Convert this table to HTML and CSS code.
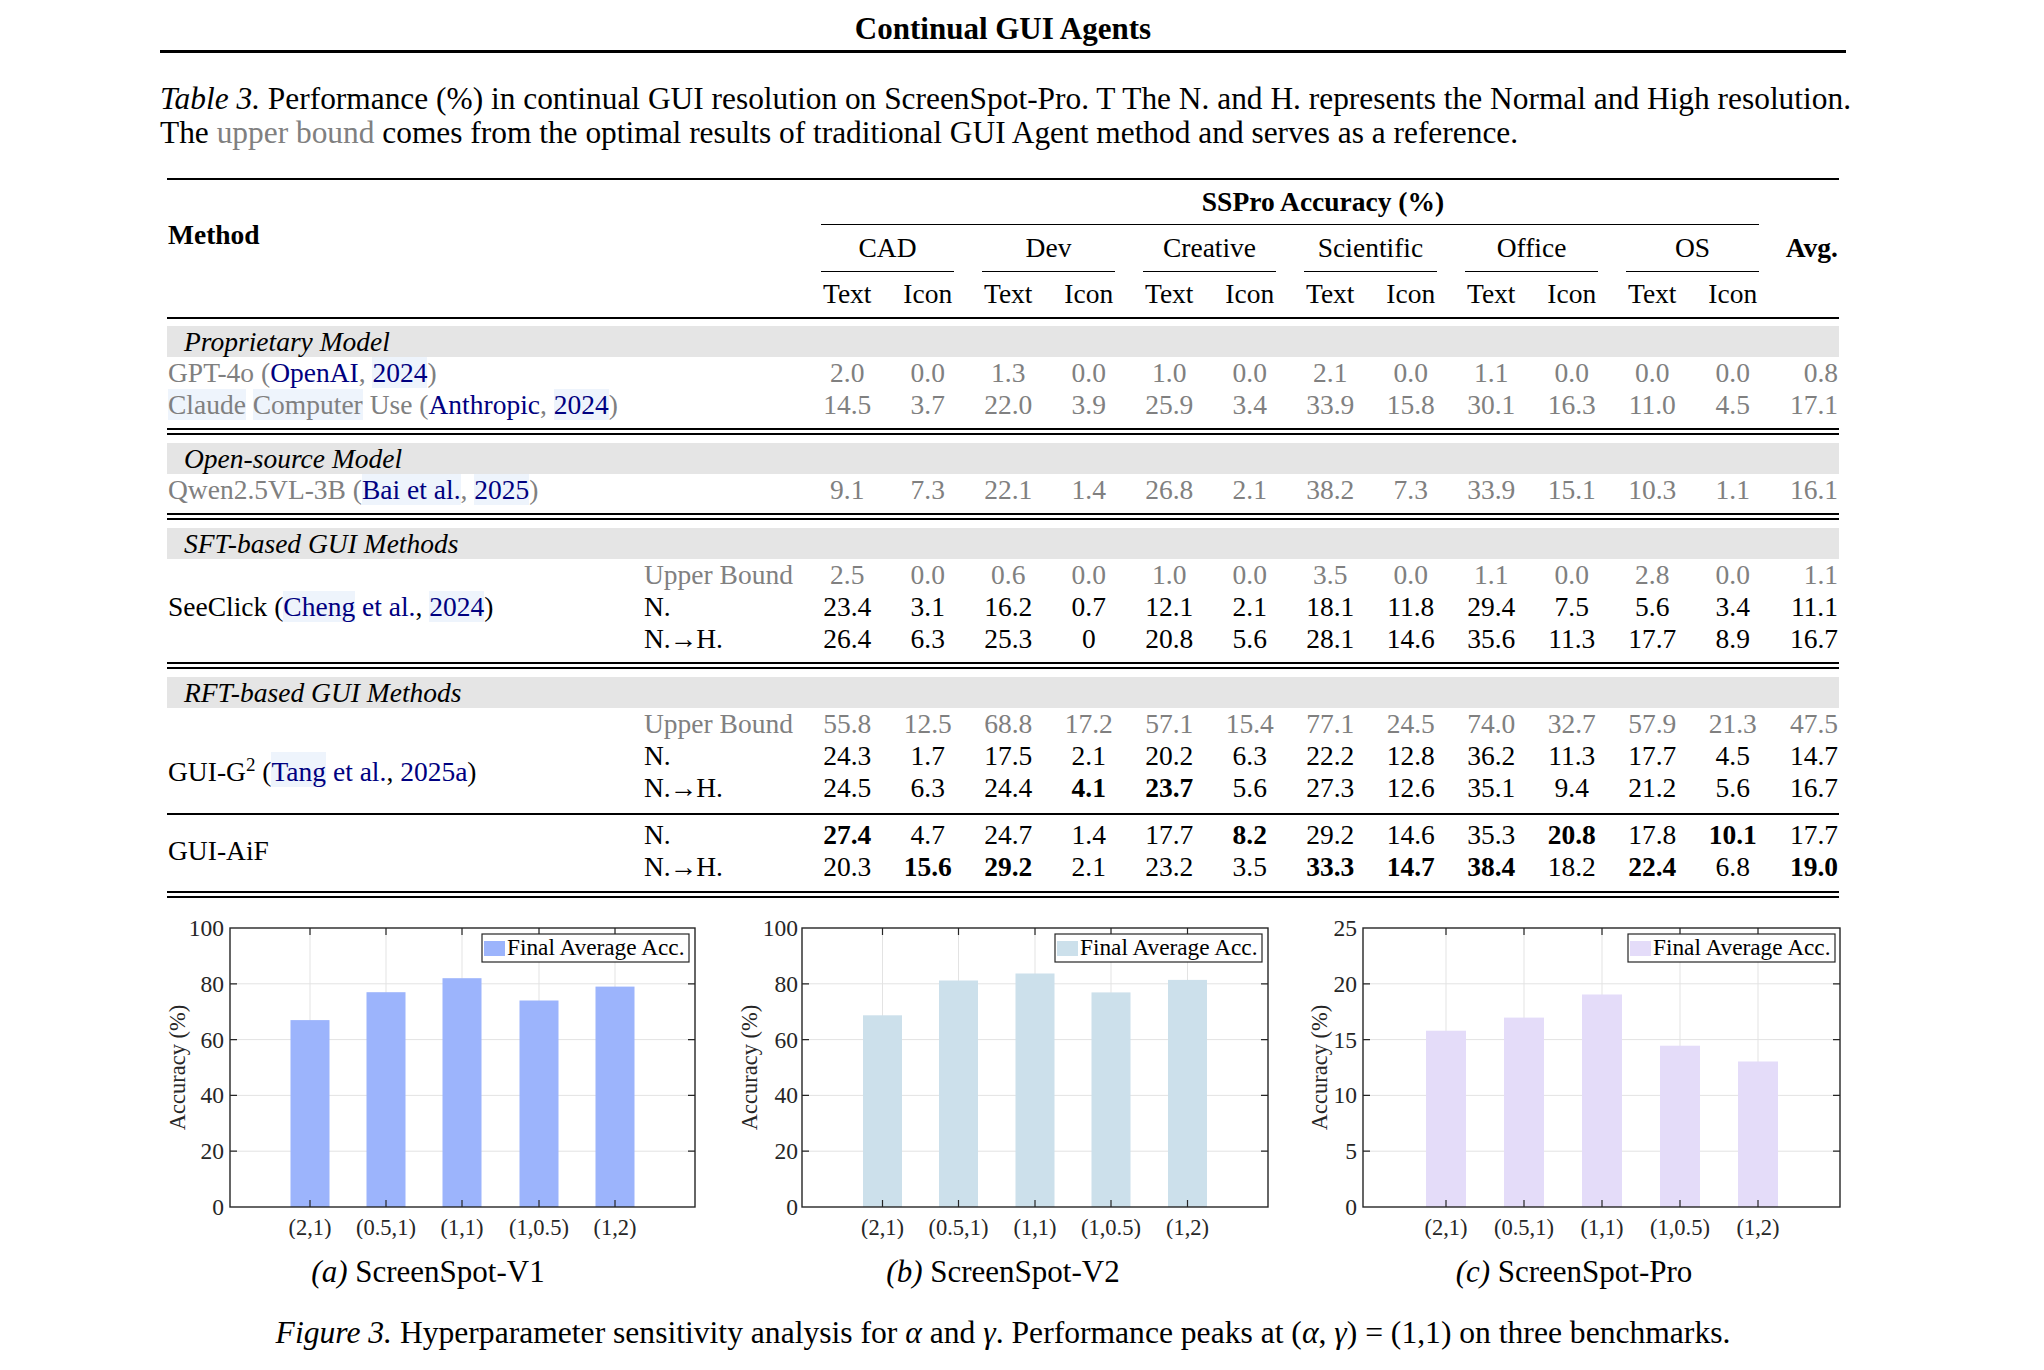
FILE: index.html
```html
<!DOCTYPE html>
<html>
<head>
<meta charset="utf-8">
<title>Continual GUI Agents</title>
<link rel="stylesheet" href="styles.css">
</head>
<body>
<div class="page">
  <header class="running">Continual GUI Agents</header>
  <p class="caption"><i>Table 3.</i> Performance (%) in continual GUI resolution on ScreenSpot-Pro. T The N. and H. represents the Normal and High resolution.<br>The <span class="gray">upper bound</span> comes from the optimal results of traditional GUI Agent method and serves as a reference.</p>

  <div class="table">
    <div class="grid thead">
      <div class="h-method">Method</div>
      <div class="h-sspro">SSPro Accuracy (%)</div>
      <div class="h-rule"></div>
      <div class="grp">CAD</div>
      <div class="grp">Dev</div>
      <div class="grp">Creative</div>
      <div class="grp">Scientific</div>
      <div class="grp">Office</div>
      <div class="grp">OS</div>
      <div class="h-avg">Avg.</div>
      <div class="sub">Text</div><div class="sub">Icon</div>
      <div class="sub">Text</div><div class="sub">Icon</div>
      <div class="sub">Text</div><div class="sub">Icon</div>
      <div class="sub">Text</div><div class="sub">Icon</div>
      <div class="sub">Text</div><div class="sub">Icon</div>
      <div class="sub">Text</div><div class="sub">Icon</div>
    </div>

    <div class="grid sec banded dbl first-sec">
      <div class="band">Proprietary Model</div>
      <div class="row muted">
        <span class="name">GPT-4o (<span class="cite">OpenAI</span>, <span class="cite hl">2024</span>)</span>
        <span class="d">2.0</span><span class="d">0.0</span><span class="d">1.3</span><span class="d">0.0</span><span class="d">1.0</span><span class="d">0.0</span><span class="d">2.1</span><span class="d">0.0</span><span class="d">1.1</span><span class="d">0.0</span><span class="d">0.0</span><span class="d">0.0</span><span class="d avg">0.8</span>
      </div>
      <div class="row muted">
        <span class="name"><span class="hl">Claude</span> <span class="hl">Computer</span> Use (<span class="cite">Anthropic</span>, <span class="cite hl">2024</span>)</span>
        <span class="d">14.5</span><span class="d">3.7</span><span class="d">22.0</span><span class="d">3.9</span><span class="d">25.9</span><span class="d">3.4</span><span class="d">33.9</span><span class="d">15.8</span><span class="d">30.1</span><span class="d">16.3</span><span class="d">11.0</span><span class="d">4.5</span><span class="d avg">17.1</span>
      </div>
    </div>

    <div class="grid sec banded dbl">
      <div class="band">Open-source Model</div>
      <div class="row muted">
        <span class="name">Qwen2.5VL-3B (<span class="cite hl">Bai et al.</span>, <span class="cite hl">2025</span>)</span>
        <span class="d">9.1</span><span class="d">7.3</span><span class="d">22.1</span><span class="d">1.4</span><span class="d">26.8</span><span class="d">2.1</span><span class="d">38.2</span><span class="d">7.3</span><span class="d">33.9</span><span class="d">15.1</span><span class="d">10.3</span><span class="d">1.1</span><span class="d avg">16.1</span>
      </div>
    </div>

    <div class="grid sec banded dbl">
      <div class="band">SFT-based GUI Methods</div>
      <span class="name multi r2-5">SeeClick (<span class="cite hl">Cheng</span> <span class="cite">et al.</span>, <span class="cite hl">2024</span>)</span>
      <div class="row muted">
        <span class="lab">Upper Bound</span>
        <span class="d">2.5</span><span class="d">0.0</span><span class="d">0.6</span><span class="d">0.0</span><span class="d">1.0</span><span class="d">0.0</span><span class="d">3.5</span><span class="d">0.0</span><span class="d">1.1</span><span class="d">0.0</span><span class="d">2.8</span><span class="d">0.0</span><span class="d avg">1.1</span>
      </div>
      <div class="row">
        <span class="lab">N.</span>
        <span class="d">23.4</span><span class="d">3.1</span><span class="d">16.2</span><span class="d">0.7</span><span class="d">12.1</span><span class="d">2.1</span><span class="d">18.1</span><span class="d">11.8</span><span class="d">29.4</span><span class="d">7.5</span><span class="d">5.6</span><span class="d">3.4</span><span class="d avg">11.1</span>
      </div>
      <div class="row">
        <span class="lab">N.<span class="arr">→</span>H.</span>
        <span class="d">26.4</span><span class="d">6.3</span><span class="d">25.3</span><span class="d">0</span><span class="d">20.8</span><span class="d">5.6</span><span class="d">28.1</span><span class="d">14.6</span><span class="d">35.6</span><span class="d">11.3</span><span class="d">17.7</span><span class="d">8.9</span><span class="d avg">16.7</span>
      </div>
    </div>

    <div class="grid sec banded single rft">
      <div class="band">RFT-based GUI Methods</div>
      <span class="name multi r3-5">GUI-G<sup class="sup">2</sup> (<span class="cite hl tall">Tang</span> <span class="cite">et al.</span>, <span class="cite">2025a</span>)</span>
      <div class="row muted">
        <span class="lab">Upper Bound</span>
        <span class="d">55.8</span><span class="d">12.5</span><span class="d">68.8</span><span class="d">17.2</span><span class="d">57.1</span><span class="d">15.4</span><span class="d">77.1</span><span class="d">24.5</span><span class="d">74.0</span><span class="d">32.7</span><span class="d">57.9</span><span class="d">21.3</span><span class="d avg">47.5</span>
      </div>
      <div class="row">
        <span class="lab">N.</span>
        <span class="d">24.3</span><span class="d">1.7</span><span class="d">17.5</span><span class="d">2.1</span><span class="d">20.2</span><span class="d">6.3</span><span class="d">22.2</span><span class="d">12.8</span><span class="d">36.2</span><span class="d">11.3</span><span class="d">17.7</span><span class="d">4.5</span><span class="d avg">14.7</span>
      </div>
      <div class="row">
        <span class="lab">N.<span class="arr">→</span>H.</span>
        <span class="d">24.5</span><span class="d">6.3</span><span class="d">24.4</span><span class="d b">4.1</span><span class="d b">23.7</span><span class="d">5.6</span><span class="d">27.3</span><span class="d">12.6</span><span class="d">35.1</span><span class="d">9.4</span><span class="d">21.2</span><span class="d">5.6</span><span class="d avg">16.7</span>
      </div>
    </div>

    <div class="grid sec dbl ours">
      <span class="name multi r1-3">GUI-AiF</span>
      <div class="row">
        <span class="lab">N.</span>
        <span class="d b">27.4</span><span class="d">4.7</span><span class="d">24.7</span><span class="d">1.4</span><span class="d">17.7</span><span class="d b">8.2</span><span class="d">29.2</span><span class="d">14.6</span><span class="d">35.3</span><span class="d b">20.8</span><span class="d">17.8</span><span class="d b">10.1</span><span class="d avg">17.7</span>
      </div>
      <div class="row">
        <span class="lab">N.<span class="arr">→</span>H.</span>
        <span class="d">20.3</span><span class="d b">15.6</span><span class="d b">29.2</span><span class="d">2.1</span><span class="d">23.2</span><span class="d">3.5</span><span class="d b">33.3</span><span class="d b">14.7</span><span class="d b">38.4</span><span class="d">18.2</span><span class="d b">22.4</span><span class="d">6.8</span><span class="d avg b">19.0</span>
      </div>
    </div>
  </div>

  <div class="figure">
    <div class="subfig sf-a">
      <svg class="chart" viewBox="0 0 562 330" width="562" height="330">
        <g class="gl">
          <line x1="70" x2="535" y1="74.8" y2="74.8"/><line x1="70" x2="535" y1="130.6" y2="130.6"/><line x1="70" x2="535" y1="186.4" y2="186.4"/><line x1="70" x2="535" y1="242.2" y2="242.2"/>
          <line x1="150" x2="150" y1="19" y2="298"/><line x1="226" x2="226" y1="19" y2="298"/><line x1="302" x2="302" y1="19" y2="298"/><line x1="379" x2="379" y1="19" y2="298"/><line x1="455" x2="455" y1="19" y2="298"/>
        </g>
        <g class="bars-a">
          <rect x="130.5" y="111.1" width="39" height="186.9"/><rect x="206.5" y="83.2" width="39" height="214.8"/><rect x="282.5" y="69.2" width="39" height="228.8"/><rect x="359.5" y="91.5" width="39" height="206.5"/><rect x="435.5" y="77.6" width="39" height="220.4"/>
        </g>
        <rect class="axbox" x="70" y="19" width="465" height="279"/>
        <path class="ticks" d="M70 74.8h7M70 130.6h7M70 186.4h7M70 242.2h7M535 74.8h-7M535 130.6h-7M535 186.4h-7M535 242.2h-7M150 298v-7M226 298v-7M302 298v-7M379 298v-7M455 298v-7M150 19v7M226 19v7M302 19v7M379 19v7M455 19v7"/>
        <g class="ytl">
          <text x="64" y="19">100</text><text x="64" y="74.8">80</text><text x="64" y="130.6">60</text><text x="64" y="186.4">40</text><text x="64" y="242.2">20</text><text x="64" y="298">0</text>
        </g>
        <g class="xtl">
          <text x="150" y="326">(2,1)</text><text x="226" y="326">(0.5,1)</text><text x="302" y="326">(1,1)</text><text x="379" y="326">(1,0.5)</text><text x="455" y="326">(1,2)</text>
        </g>
        <text class="yl" transform="translate(17 158.5) rotate(-90)">Accuracy (%)</text>
        <rect class="lgbox" x="322" y="25" width="207" height="28"/>
        <rect class="bars-a" x="324" y="32" width="21" height="15"/>
        <text class="lg" x="347" y="46">Final Average Acc.</text>
      </svg>
      <div class="subcap"><i>(a)</i> ScreenSpot-V1</div>
    </div>

    <div class="subfig sf-b">
      <svg class="chart" viewBox="0 0 562 330" width="562" height="330">
        <g class="gl">
          <line x1="80" x2="546" y1="74.8" y2="74.8"/><line x1="80" x2="546" y1="130.6" y2="130.6"/><line x1="80" x2="546" y1="186.4" y2="186.4"/><line x1="80" x2="546" y1="242.2" y2="242.2"/>
          <line x1="160.5" x2="160.5" y1="19" y2="298"/><line x1="236.5" x2="236.5" y1="19" y2="298"/><line x1="313" x2="313" y1="19" y2="298"/><line x1="389" x2="389" y1="19" y2="298"/><line x1="465.5" x2="465.5" y1="19" y2="298"/>
        </g>
        <g class="bars-b">
          <rect x="141" y="106.3" width="39" height="191.7"/><rect x="217" y="71.5" width="39" height="226.5"/><rect x="293.5" y="64.5" width="39" height="233.5"/><rect x="369.5" y="83.4" width="39" height="214.6"/><rect x="446" y="70.9" width="39" height="227.1"/>
        </g>
        <rect class="axbox" x="80" y="19" width="466" height="279"/>
        <path class="ticks" d="M80 74.8h7M80 130.6h7M80 186.4h7M80 242.2h7M546 74.8h-7M546 130.6h-7M546 186.4h-7M546 242.2h-7M160.5 298v-7M236.5 298v-7M313 298v-7M389 298v-7M465.5 298v-7M160.5 19v7M236.5 19v7M313 19v7M389 19v7M465.5 19v7"/>
        <g class="ytl">
          <text x="76" y="19">100</text><text x="76" y="74.8">80</text><text x="76" y="130.6">60</text><text x="76" y="186.4">40</text><text x="76" y="242.2">20</text><text x="76" y="298">0</text>
        </g>
        <g class="xtl">
          <text x="160.5" y="326">(2,1)</text><text x="236.5" y="326">(0.5,1)</text><text x="313" y="326">(1,1)</text><text x="389" y="326">(1,0.5)</text><text x="465.5" y="326">(1,2)</text>
        </g>
        <text class="yl" transform="translate(27 158.5) rotate(-90)">Accuracy (%)</text>
        <rect class="lgbox" x="333" y="25" width="207" height="28"/>
        <rect class="bars-b" x="335" y="32" width="21" height="15"/>
        <text class="lg" x="358" y="46">Final Average Acc.</text>
      </svg>
      <div class="subcap"><i>(b)</i> ScreenSpot-V2</div>
    </div>

    <div class="subfig sf-c">
      <svg class="chart" viewBox="0 0 562 330" width="562" height="330">
        <g class="gl">
          <line x1="79" x2="556" y1="74.8" y2="74.8"/><line x1="79" x2="556" y1="130.6" y2="130.6"/><line x1="79" x2="556" y1="186.4" y2="186.4"/><line x1="79" x2="556" y1="242.2" y2="242.2"/>
          <line x1="162" x2="162" y1="19" y2="298"/><line x1="240" x2="240" y1="19" y2="298"/><line x1="318" x2="318" y1="19" y2="298"/><line x1="396" x2="396" y1="19" y2="298"/><line x1="474" x2="474" y1="19" y2="298"/>
        </g>
        <g class="bars-c">
          <rect x="142" y="121.7" width="40" height="176.3"/><rect x="220" y="108.6" width="40" height="189.4"/><rect x="298" y="85.5" width="40" height="212.5"/><rect x="376" y="136.7" width="40" height="161.3"/><rect x="454" y="152.5" width="40" height="145.5"/>
        </g>
        <rect class="axbox" x="79" y="19" width="477" height="279"/>
        <path class="ticks" d="M79 74.8h7M79 130.6h7M79 186.4h7M79 242.2h7M556 74.8h-7M556 130.6h-7M556 186.4h-7M556 242.2h-7M162 298v-7M240 298v-7M318 298v-7M396 298v-7M474 298v-7M162 19v7M240 19v7M318 19v7M396 19v7M474 19v7"/>
        <g class="ytl">
          <text x="73" y="19">25</text><text x="73" y="74.8">20</text><text x="73" y="130.6">15</text><text x="73" y="186.4">10</text><text x="73" y="242.2">5</text><text x="73" y="298">0</text>
        </g>
        <g class="xtl">
          <text x="162" y="326">(2,1)</text><text x="240" y="326">(0.5,1)</text><text x="318" y="326">(1,1)</text><text x="396" y="326">(1,0.5)</text><text x="474" y="326">(1,2)</text>
        </g>
        <text class="yl" transform="translate(35 158.5) rotate(-90)">Accuracy (%)</text>
        <rect class="lgbox" x="344" y="25" width="207" height="28"/>
        <rect class="bars-c" x="346" y="32" width="21" height="15"/>
        <text class="lg" x="369" y="46">Final Average Acc.</text>
      </svg>
      <div class="subcap"><i>(c)</i> ScreenSpot-Pro</div>
    </div>
  </div>

  <p class="figcap"><i>Figure 3.</i> Hyperparameter sensitivity analysis for <i>α</i> and <i>γ</i>. Performance peaks at (<i>α</i>, <i>γ</i>) = (1,1) on three benchmarks.</p>
</div>
</body>
</html>
```

FILE: styles.css
```css
* {
  box-sizing: border-box;
  margin: 0;
  padding: 0;
}

body {
  margin: 0;
  background: #ffffff;
  font-family: "Liberation Serif", "Times New Roman", serif;
  color: #000000;
}

.page {
  width: 1686px;
  margin-left: 160px;
}

/* running header */
.running {
  font-weight: bold;
  font-size: 31px;
  line-height: 36px;
  text-align: center;
  padding-top: 11px;
  padding-bottom: 3px;
  border-bottom: 3px solid #000;
}

.caption {
  font-size: 31.4px;
  line-height: 34px;
  margin-top: 29px;
  white-space: nowrap;
}

.gray {
  color: #808080;
}

/* table */
.table {
  margin: 28px 0 0 7px;
  width: 1672px;
  font-size: 27.5px;
}

.grid {
  display: grid;
  grid-template-columns: 477px 163px repeat(12, 80.5px) 66px;
}

.thead {
  border-top: 2px solid #000;
  border-bottom: 2px solid #000;
  grid-template-rows: 45px 47px 45px;
}

.h-method {
  grid-column: 1 / 3;
  grid-row: 1 / 4;
  font-weight: bold;
  padding-top: 39px;
  line-height: 32px;
  padding-left: 1px;
}

.h-sspro {
  grid-column: 3 / 16;
  grid-row: 1;
  font-weight: bold;
  text-align: center;
  line-height: 44px;
}

.h-rule {
  grid-column: 3 / 15;
  grid-row: 1;
  margin: 0 14px;
  height: 1px;
  border-bottom: 1px solid #000;
  align-self: end;
}

.grp {
  grid-column: span 2;
  grid-row: 2;
  margin: 0 14px;
  border-bottom: 1px solid #000;
  text-align: center;
  line-height: 46px;
}

.h-avg {
  grid-column: 15;
  grid-row: 2;
  font-weight: bold;
  text-align: right;
  line-height: 46px;
  padding-right: 1px;
}

.sub {
  grid-row: 3;
  text-align: center;
  line-height: 44px;
}

/* body sections */
.sec {
  padding: 8px 0 7px;
  grid-auto-rows: 32px;
  line-height: 32px;
}

.sec.first-sec {
  padding-top: 7px;
}

.sec.banded {
  grid-template-rows: 31px;
}

.sec.rft {
  padding-bottom: 9px;
}

.sec.ours {
  padding-top: 4px;
  padding-bottom: 8px;
}

.band {
  grid-column: 1 / -1;
  background: #e5e5e5;
  font-style: italic;
  padding-left: 17px;
  line-height: 31px;
}

.dbl {
  border-bottom: 7px double #000;
}

.single {
  border-bottom: 2px solid #000;
}

.row {
  display: contents;
}

.muted {
  color: #808080;
}

.name {
  grid-column: 1 / 3;
  padding-left: 1px;
  white-space: nowrap;
}

.name.multi {
  grid-column: 1;
  align-self: center;
}

.r2-5 { grid-row: 2 / 5; }
.r3-5 { grid-row: 3 / 5; }
.r1-3 { grid-row: 1 / 3; }

.lab {
  grid-column: 2;
  white-space: nowrap;
}

.arr {
  display: inline-block;
  margin: 0 -1px;
}

.d {
  text-align: center;
}

.d.avg {
  text-align: right;
  padding-right: 1px;
}

.b {
  font-weight: bold;
  color: #000;
}

.cite {
  color: #000080;
}

.hl {
  background: #eef4fc;
}

.hl.tall {
  padding-top: 4px;
}

.sup {
  font-size: 19px;
  line-height: 0;
  vertical-align: 10px;
}

/* figure */
.figure {
  display: flex;
  margin-top: 11px;
}

.subfig {
  width: 562px;
  display: flex;
  flex-direction: column;
  align-items: center;
}

.chart {
  display: block;
  width: 562px;
  height: 330px;
}

.chart text {
  font-family: "Liberation Serif", "Times New Roman", serif;
  fill: #262626;
}

.gl line {
  stroke: #e3e3e3;
  stroke-width: 1;
}

.bars-a, .bars-a rect { fill: #9cb4fc; }
.bars-b, .bars-b rect { fill: #cce0eb; }
.bars-c, .bars-c rect { fill: #e4dcf9; }

.axbox {
  fill: none;
  stroke: #262626;
  stroke-width: 1.4;
}

.ticks {
  fill: none;
  stroke: #262626;
  stroke-width: 1.2;
}

.ytl text {
  font-size: 23.5px;
  text-anchor: end;
  dominant-baseline: central;
}

.xtl text {
  font-size: 22.5px;
  text-anchor: middle;
}

.chart .yl {
  font-size: 22.5px;
  text-anchor: middle;
  dominant-baseline: central;
}

.lgbox {
  fill: #ffffff;
  stroke: #262626;
  stroke-width: 1.2;
}

.chart .lg {
  font-size: 23.3px;
  fill: #000;
}

.subcap {
  font-size: 31px;
  line-height: 36px;
  margin-top: 15px;
  white-space: nowrap;
}

.sf-a .subcap {
  padding-right: 26px;
}

.sf-c .subcap {
  padding-left: 18px;
}

.figcap {
  font-size: 31.6px;
  line-height: 36px;
  margin-top: 25px;
  text-align: center;
  white-space: nowrap;
}
```
